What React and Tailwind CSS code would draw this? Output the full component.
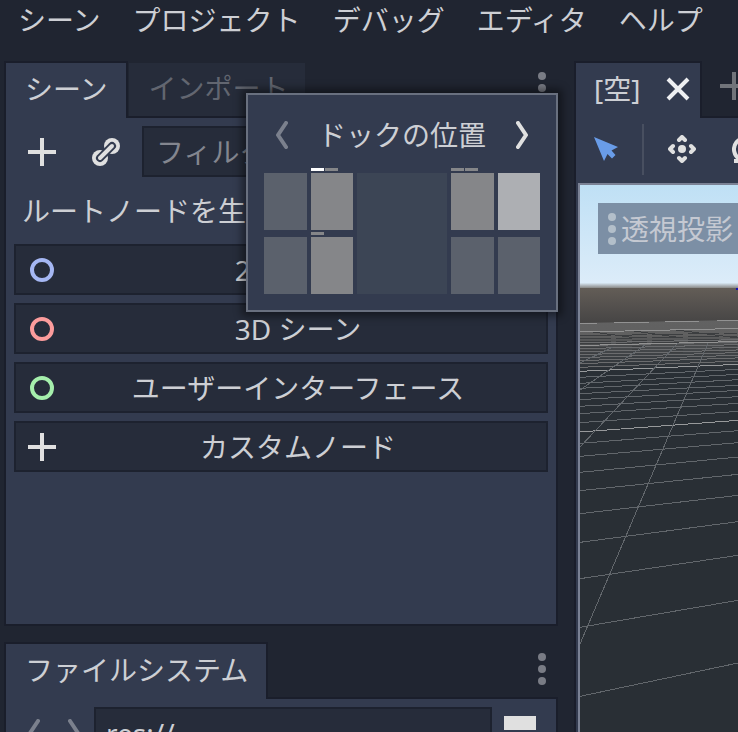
import React from "react";

const FONT = "font-['Noto_Sans','Noto_Sans_CJK_JP',sans-serif]";

function Plus({ className = "" }) {
  return (
    <svg viewBox="0 0 28 28" className={"h-7 w-7 shrink-0 " + className} fill="currentColor" aria-hidden="true">
      <path d="M12 0h4v12h12v4H16v12h-4V16H0v-4h12z" />
    </svg>
  );
}

function Dots({ className = "" }) {
  return (
    <svg viewBox="0 0 8 32" className={"h-8 w-2 shrink-0 " + className} fill="currentColor" aria-hidden="true">
      <circle cx="4" cy="4" r="4" />
      <circle cx="4" cy="16" r="4" />
      <circle cx="4" cy="28" r="4" />
    </svg>
  );
}

function Chevron({ right = false, className = "" }) {
  return (
    <svg viewBox="0 0 12 28" className={"h-7 w-3 shrink-0 " + className} fill="none" stroke="currentColor" strokeWidth="4" strokeLinecap="round" strokeLinejoin="round" aria-hidden="true">
      <path d={right ? "M2 2L10 14L2 26" : "M10 2L2 14L10 26"} />
    </svg>
  );
}

function Ring({ className = "" }) {
  return (
    <svg viewBox="0 0 24 24" className={"mx-0.5 h-6 w-6 shrink-0 " + className} fill="none" stroke="currentColor" strokeWidth="4" aria-hidden="true">
      <circle cx="12" cy="12" r="10" />
    </svg>
  );
}

function Link() {
  return (
    <svg viewBox="0 0 28 28" className="h-7 w-7" fill="#e0e0e0" strokeLinecap="round" aria-hidden="true">
      <circle cx="8" cy="20" r="8" />
      <circle cx="20" cy="8" r="8" />
      <path d="M8 20L20 8" stroke="#333b4f" strokeWidth="8" />
      <path d="M8 20L20 8" stroke="#e0e0e0" strokeWidth="4" />
    </svg>
  );
}

const rows = [
  [94, 73, 1], [112, 88], [130, 103], [145, 119], [161, 136], [179, 151], [199, 170], [221, 190], [248, 214],
  [276, 241, 1], [310, 272], [349, 308], [397, 351], [452, 403], [521, 466], [607, 545], [716, 646], [862, 781], [1069, 969],
];
const far = [9, 17, 26, 35, 44, 53, 62, 71, 82];
const gaps = [151, 154, 157, 159, 163, 166, 169];

function Scene() {
  return (
    <svg viewBox="0 0 158 547" preserveAspectRatio="xMinYMin slice" className="absolute inset-0 h-full w-full" aria-hidden="true">
      <defs>
        <linearGradient id="sky" x1="0" y1="0" x2="0" y2="1">
          <stop offset="0" stopColor="#bfe0f5" />
          <stop offset="0.94" stopColor="#dcecf9" />
          <stop offset="1" stopColor="#78746f" />
        </linearGradient>
        <linearGradient id="ground" x1="0" y1="0" x2="0" y2="1">
          <stop offset="0" stopColor="#635d57" />
          <stop offset="1" stopColor="#454444" />
        </linearGradient>
        <linearGradient id="haze" x1="0" y1="0" x2="0" y2="1">
          <stop offset="0" stopColor="#626262" />
          <stop offset="0.3" stopColor="#606060" />
          <stop offset="0.5" stopColor="#4a4c4e" />
          <stop offset="1" stopColor="#292f35" />
        </linearGradient>
      </defs>
      <rect width="158" height="547" fill="#292f35" />
      <rect width="158" height="104" fill="url(#sky)" />
      <rect y="103" width="158" height="36" fill="url(#ground)" />
      <path d="M0 138L158 135V186H0Z" fill="url(#haze)" />
      <g shapeRendering="crispEdges" strokeWidth="1">
        {gaps.map((y) => (
          <path key={y} d={`M0 ${y}L158 ${y - 3}`} stroke="#3c3e40" strokeDasharray="31 5" />
        ))}
        <path d="M13 147L56 153M54 146L103 153M96 145L158 153" stroke="#3c3e40" />
        {far.map((z) => (
          <path key={z} d={`M0 ${155 + z / 3}L158 ${152 + z / 3.4}`} stroke="#6b6c6e" />
        ))}
        {rows.map(([a, b, bright]) => (
          <path key={a} d={`M0 ${155 + a / 3}L158 ${155 + b / 3}`} stroke={bright ? "#97999b" : "#62676c"} />
        ))}
        <path d="M0 138.5H17M34 137.5H69M85 136.5H119M137 135.5H158M0 147L158 143.5M0 160.5L158 156.5" stroke="#929292" />
        <path d="M0 459L128 158M0 262L98 158M0 205L65 160M0 178L33 162" stroke="#62676c" />
      </g>
      <rect x="156" y="103" width="2" height="2" fill="#1414b4" />
    </svg>
  );
}

const nodes = [
  { label: "2D シーン", icon: <Ring className="text-[#a5b7f3]" /> },
  { label: "3D シーン", icon: <Ring className="text-[#fc9c9c]" /> },
  { label: "ユーザーインターフェース", icon: <Ring className="text-[#a5efac]" /> },
  { label: "カスタムノード", icon: <Plus className="text-[#e0e0e0]" /> },
];

function Slot({ tone, tabs = [] }) {
  return (
    <button type="button" className="flex flex-1 flex-col">
      <span className="flex h-[5px] gap-px">
        {tabs.map((t, i) => (
          <span key={i} className={"h-[3px] w-[13px] " + t} />
        ))}
      </span>
      <span className={"h-[57px] w-full " + tone} />
    </button>
  );
}

const DIM = "bg-[#5b616c]";
const MID = "bg-[#858689]";

function DockPopup() {
  return (
    <div role="dialog" aria-label="ドックの位置" className="absolute top-[93px] right-0 w-[312px] border-2 border-[#69707f] bg-[#333b4f] px-4 pt-5 pb-4 shadow-[0_0_8px_4px_rgba(0,0,0,0.45)]">
      <div className="flex h-10 items-center justify-between px-3">
        <button type="button" aria-label="前へ"><Chevron className="text-[#7b808d]" /></button>
        <span>ドックの位置</span>
        <button type="button" aria-label="次へ"><Chevron right className="text-[#e0e0e0]" /></button>
      </div>
      <div className="mt-[13px] flex gap-1">
        <div className="flex w-[89px] flex-col gap-0.5">
          <div className="flex gap-1"><Slot tone={DIM} /><Slot tone={MID} tabs={["bg-white", "bg-[#858689]"]} /></div>
          <div className="flex gap-1"><Slot tone={DIM} /><Slot tone={MID} tabs={["bg-[#858689]"]} /></div>
        </div>
        <div className="mt-[5px] flex-1 bg-[#3c4555]" />
        <div className="flex w-[89px] flex-col gap-0.5">
          <div className="flex gap-1"><Slot tone={MID} tabs={["bg-[#858689]", "bg-[#858689]"]} /><Slot tone="bg-[#adafb3]" /></div>
          <div className="flex gap-1"><Slot tone={DIM} /><Slot tone={DIM} /></div>
        </div>
      </div>
    </div>
  );
}

const TAB = "relative z-10 -mb-0.5 flex h-[57px] items-center border-2 border-b-0 border-[#1a1e2b] bg-[#333b4f] pr-[18px] pl-[19px] pb-1";

export default function App() {
  return (
    <div className={"flex h-screen flex-col overflow-hidden bg-[#202531] text-[28px] leading-10 whitespace-nowrap text-[#cdcfd4] " + FONT}>
      <nav className="flex h-[61px] shrink-0 gap-8 px-[18px]">
        {["シーン", "プロジェクト", "デバッグ", "エディタ", "ヘルプ"].map((m) => (
          <button key={m} type="button" className="h-10 shrink-0">{m}</button>
        ))}
      </nav>
      <div className="flex min-h-0 flex-1 gap-4 pl-1">
        <div className="w-[554px] shrink-0">
          <section>
            <div className="flex items-start" role="tablist">
              <button type="button" role="tab" aria-selected="true" className={TAB}>シーン</button>
              <button type="button" role="tab" aria-selected="false" className="mt-0.5 ml-px flex h-[53px] items-center bg-[#262c3a] pr-4 pl-5 pb-1 text-[#626670]">インポート</button>
              <button type="button" aria-label="ドックのオプション" className="mt-[11px] mr-3 ml-auto text-[#797c85]"><Dots className="block" /></button>
            </div>
            <div className="flex h-[510px] flex-col border-2 border-[#1a1e2b] bg-[#333b4f] p-2">
              <div className="flex items-center">
                <button type="button" aria-label="追加" className="ml-[14px] text-[#e0e0e0]"><Plus className="block" /></button>
                <button type="button" aria-label="リンク" className="ml-9"><Link /></button>
                <input aria-label="フィルター" placeholder="フィルター" className="ml-[22px] h-[51px] min-w-0 flex-1 border-2 border-[#1d222f] bg-[#262c3a] px-3 placeholder:text-[#83868f]" />
              </div>
              <h2 className="mt-[14px] pl-2">ルートノードを生成:</h2>
              <div className="mt-[13px] flex flex-col gap-2">
                {nodes.map((n) => (
                  <button key={n.label} type="button" className="flex h-[51px] items-center border-2 border-[#1d222f] bg-[#262c3a] pr-1.5 pl-3">
                    {n.icon}
                    <span className="flex-1 text-center">{n.label}</span>
                  </button>
                ))}
              </div>
            </div>
          </section>
          <section className="mt-4">
            <div className="flex items-start">
              <button type="button" role="tab" aria-selected="true" className={TAB}>ファイルシステム</button>
              <button type="button" aria-label="ファイルシステムのオプション" className="mt-[11px] mr-3 ml-auto text-[#797c85]"><Dots className="block" /></button>
            </div>
            <div className="flex items-center border-2 border-[#1a1e2b] bg-[#333b4f] p-2">
              <button type="button" aria-label="戻る" className="ml-[14px]"><Chevron className="block text-[#7b808d]" /></button>
              <button type="button" aria-label="進む" className="ml-7"><Chevron right className="block text-[#7b808d]" /></button>
              <input aria-label="パス" defaultValue="res://" className="ml-[14px] h-[51px] min-w-0 flex-1 border-2 border-[#1d222f] bg-[#262c3a] px-[10px]" />
              <button type="button" aria-label="分割表示" className="mr-3 ml-3 flex flex-col gap-[5px]">
                <span className="h-[14px] w-8 bg-[#e0e0e0]" />
                <span className="h-[14px] w-8 bg-[#e0e0e0]" />
              </button>
            </div>
          </section>
        </div>
        <main className="flex min-w-0 flex-1 flex-col overflow-hidden">
          <div className="flex shrink-0 items-start">
            <div className={TAB + " shrink-0"}>
              <span className="-ml-px">[空]</span>
              <button type="button" aria-label="閉じる" className="-mr-2 ml-[26px]">
                <svg viewBox="0 0 24 24" className="block h-6 w-6" fill="none" stroke="#eeeff2" strokeWidth="4" aria-hidden="true"><path d="M2 2L22 22M22 2L2 22" /></svg>
              </button>
            </div>
            <button type="button" aria-label="新しいシーン" className="mt-[11px] ml-[18px] shrink-0 text-[#71747a]"><Plus className="block" /></button>
          </div>
          <div className="flex min-h-0 flex-1 flex-col border-t-2 border-l-2 border-[#1a1e2b] bg-[#333b4f]">
            <div className="flex h-[65px] shrink-0 items-start pt-1.5">
              <button type="button" aria-label="選択" className="mt-[13px] ml-[18px] shrink-0">
                <svg viewBox="0 0 24 24" className="block h-6 w-6" fill="#699ce8" aria-hidden="true"><path d="M0 0L24 10L17.5 13.5L21.5 18L18 21.5L13.5 17L10 24Z" /></svg>
              </button>
              <span className="ml-6 h-[51px] w-0.5 shrink-0 bg-[#484f60]" />
              <button type="button" aria-label="移動" className="mt-[11px] ml-6 shrink-0">
                <svg viewBox="0 0 28 28" className="block h-7 w-7" fill="none" stroke="#e0e0e0" strokeWidth="4" strokeLinecap="round" strokeLinejoin="round" aria-hidden="true">
                  <circle cx="14" cy="14" r="4" fill="#e0e0e0" stroke="none" />
                  <path d="M11 5L14 2L17 5M11 23L14 26L17 23M5 11L2 14L5 17M23 11L26 14L23 17" />
                </svg>
              </button>
              <button type="button" aria-label="回転" className="mt-3 ml-9 shrink-0">
                <svg viewBox="0 0 28 28" className="block h-7 w-7" fill="none" stroke="#e0e0e0" strokeWidth="4" aria-hidden="true"><path d="M8 23A11 11 0 1 1 18 23M2 25H10V17" /></svg>
              </button>
            </div>
            <div className="relative ml-0.5 flex-1 border-t-2 border-l-2 border-[#7b8295]">
              <Scene />
              <button type="button" className="absolute top-[18px] left-[18px] flex h-[51px] w-[160px] items-center gap-[5px] bg-[#7c8fa5] pl-[10px] text-[#c5c9d2]">
                <Dots className="text-[#b3bfca]" />
                透視投影
              </button>
            </div>
          </div>
        </main>
      </div>
      <div className="absolute top-0 left-0 w-[558px]"><DockPopup /></div>
    </div>
  );
}
